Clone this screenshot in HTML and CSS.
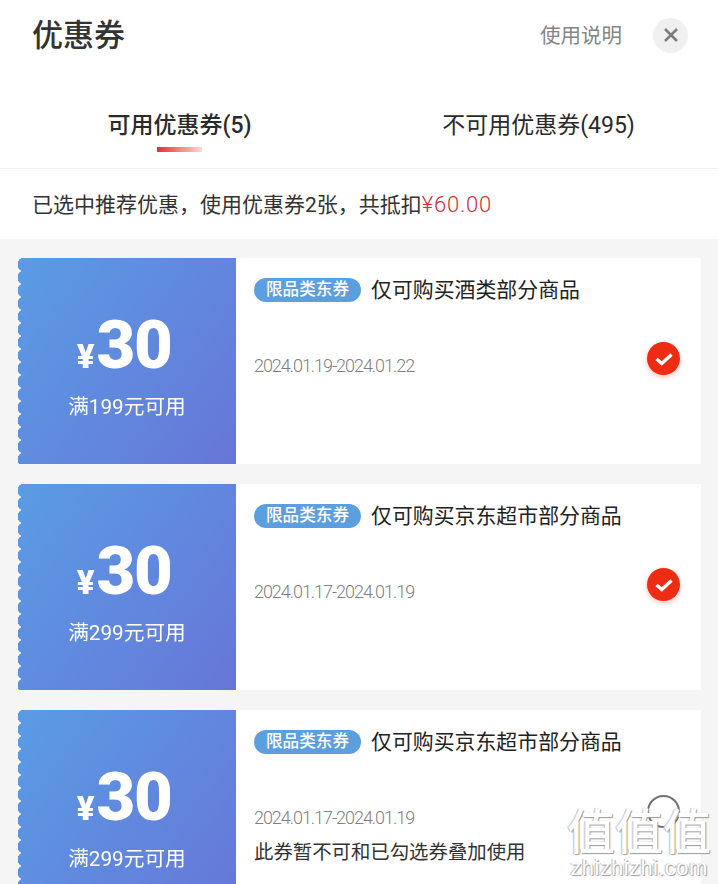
FILE: index.html
```html
<!DOCTYPE html>
<html lang="zh-CN">
<head>
    <meta charset="UTF-8">
    <meta name="viewport" content="width=device-width, initial-scale=1.0">
    <title>优惠券</title>
    <link rel="stylesheet" href="styles.css">
</head>
<body>

    <!-- Header -->
    <header class="top-bar">
        <h1 class="page-title">优惠券</h1>
        <div class="top-actions">
            <span class="help-link">使用说明</span>
            <button class="close-btn" aria-label="关闭">
                <svg width="16" height="16" viewBox="0 0 16 16"><path d="M2 2 L14 14 M14 2 L2 14" stroke="#7d7d7d" stroke-width="2.6" fill="none"/></svg>
            </button>
        </div>
    </header>

    <!-- Tabs -->
    <nav class="tabs">
        <div class="tab tab-active">可用优惠券(5)</div>
        <div class="tab">不可用优惠券(495)</div>
    </nav>

    <div class="summary">已选中推荐优惠，使用优惠券2张，共抵扣<span class="summary-price">¥60.00</span></div>

    <!-- Coupon list -->
    <main class="coupon-list">
        <section class="coupon">
            <div class="coupon-left">
                <div class="amount"><span class="yen">¥</span><span class="value">30</span></div>
                <div class="condition">满199元可用</div>
            </div>
            <div class="coupon-right">
                <div class="coupon-head">
                    <span class="badge">限品类东券</span>
                    <span class="coupon-title">仅可购买酒类部分商品</span>
                </div>
                <div class="coupon-date">2024.01.19-2024.01.22</div>
                <span class="check">
                    <svg width="20" height="16" viewBox="0 0 20 16"><path d="M2.5 8 L7.8 12.5 L17.5 3.5" stroke="#fff" stroke-width="3.4" fill="none"/></svg>
                </span>
            </div>
        </section>

        <section class="coupon">
            <div class="coupon-left">
                <div class="amount"><span class="yen">¥</span><span class="value">30</span></div>
                <div class="condition">满299元可用</div>
            </div>
            <div class="coupon-right">
                <div class="coupon-head">
                    <span class="badge">限品类东券</span>
                    <span class="coupon-title">仅可购买京东超市部分商品</span>
                </div>
                <div class="coupon-date">2024.01.17-2024.01.19</div>
                <span class="check">
                    <svg width="20" height="16" viewBox="0 0 20 16"><path d="M2.5 8 L7.8 12.5 L17.5 3.5" stroke="#fff" stroke-width="3.4" fill="none"/></svg>
                </span>
            </div>
        </section>

        <section class="coupon">
            <div class="coupon-left">
                <div class="amount"><span class="yen">¥</span><span class="value">30</span></div>
                <div class="condition">满299元可用</div>
            </div>
            <div class="coupon-right">
                <div class="coupon-head">
                    <span class="badge">限品类东券</span>
                    <span class="coupon-title">仅可购买京东超市部分商品</span>
                </div>
                <div class="coupon-date">2024.01.17-2024.01.19</div>
                <div class="coupon-note">此券暂不可和已勾选券叠加使用</div>
                <span class="radio"></span>
            </div>
        </section>
    </main>

    <!-- Watermark -->
    <div class="watermark">
        <div class="watermark-mark">值值值</div>
        <div class="watermark-url">zhizhizhi.com</div>
    </div>

</body>
</html>
```

FILE: styles.css
```css
/* Global Styles */
html, body {
    height: 884px;
    overflow: hidden;
}

body {
    position: relative;
    margin: 0;
    background-color: #fff;
    color: #262626;
    font-family: Roboto, "Noto Sans CJK SC", sans-serif;
}

/* Header */
.top-bar {
    display: flex;
    justify-content: space-between;
    align-items: center;
    height: 70px;
    padding: 0 30px 0 32px;
}

.page-title {
    margin: -6px 0 0;
    font-size: 31px;
    font-weight: 500;
    color: #333;
}

.top-actions {
    display: flex;
    align-items: center;
    gap: 31px;
}

.help-link {
    margin-top: -3px;
    font-size: 20.5px;
    color: #858585;
}

.close-btn {
    display: flex;
    justify-content: center;
    align-items: center;
    width: 35px;
    height: 35px;
    padding: 0;
    border: none;
    border-radius: 50%;
    background-color: #f0f0f0;
}

/* Tabs */
.tabs {
    display: flex;
    height: 98px;
    border-bottom: 1px solid #efefef;
}

.tab {
    position: relative;
    flex: 1;
    padding-top: 39px;
    text-align: center;
    font-size: 23px;
    line-height: 33px;
    color: #2a2a2a;
}

.tab-active {
    font-weight: 500;
}

.tab-active::after {
    content: "";
    position: absolute;
    left: 157px;
    top: 77px;
    width: 45px;
    height: 5px;
    background: linear-gradient(90deg, #e2312a, #f9d9d5);
}

/* Summary */
.summary {
    height: 70px;
    padding-left: 32px;
    font-size: 21px;
    line-height: 71px;
    color: #333;
}

.summary-price {
    color: #d92b35;
    font-size: 22px;
    font-weight: 300;
    letter-spacing: 0.8px;
}

/* Coupons */
.coupon-list {
    display: flex;
    flex-direction: column;
    gap: 20px;
    box-sizing: border-box;
    height: 645px;
    padding: 19px 17px 0 18px;
    background-color: #f5f5f5;
    overflow: hidden;
}

.coupon {
    display: flex;
    flex-shrink: 0;
    height: 206px;
}

/* mask cuts the scalloped left edge */
.coupon-left {
    display: flex;
    flex-direction: column;
    align-items: center;
    width: 218px;
    background: linear-gradient(125deg, #5a9ce4, #6776d8);
    color: #fff;
    -webkit-mask:
        radial-gradient(circle at 6.5px 6.5px, #000 6.9px, transparent 7.3px) 0 0 / 13px 13px repeat-y,
        linear-gradient(#000, #000) 4px 0 / 214px 100% no-repeat;
    mask:
        radial-gradient(circle at 6.5px 6.5px, #000 6.9px, transparent 7.3px) 0 0 / 13px 13px repeat-y,
        linear-gradient(#000, #000) 4px 0 / 214px 100% no-repeat;
}

.amount {
    display: flex;
    align-items: baseline;
    height: 70px;
    margin: 52px 6px 0 0;
    line-height: 70px;
    font-weight: 900;
}

.yen {
    font-size: 33px;
    margin-right: 2px;
}

.value {
    font-size: 67px;
    letter-spacing: -1.5px;
}

.condition {
    margin-top: 12px;
    font-size: 20.7px;
    line-height: 30px;
}

.coupon-right {
    position: relative;
    flex: 1;
    padding: 20px 0 0 18px;
    background-color: #fff;
}

.coupon-head {
    display: flex;
    align-items: center;
    gap: 10px;
    height: 24px;
}

.badge {
    width: 107px;
    height: 24px;
    border-radius: 12px;
    background-color: #5b9fe0;
    color: #fff;
    font-size: 16.6px;
    font-weight: 500;
    line-height: 24px;
    text-align: center;
}

.coupon-title {
    margin-top: -5px;
    font-size: 20.9px;
    color: #222;
}

.coupon-date {
    margin-top: 51px;
    font-size: 18px;
    font-weight: 300;
    letter-spacing: -1.05px;
    line-height: 26px;
    color: #808080;
}

.coupon-note {
    margin-top: 8px;
    font-size: 19.4px;
    line-height: 28px;
    color: #333;
}

.check {
    position: absolute;
    right: 21px;
    top: 84px;
    display: flex;
    justify-content: center;
    align-items: center;
    width: 33px;
    height: 33px;
    border-radius: 50%;
    background-color: #ee2c14;
    box-shadow: 0 2px 5px rgba(238, 44, 20, 0.3);
}

.radio {
    position: absolute;
    right: 21px;
    top: 85px;
    width: 29px;
    height: 29px;
    border: 2px solid #707070;
    border-radius: 50%;
}

/* Watermark */
.watermark {
    position: absolute;
    right: 6px;
    bottom: 3px;
    width: 146px;
    text-align: center;
    color: #fff;
    font-family: "Noto Sans CJK SC", sans-serif;
}

.watermark-mark {
    font-size: 48px;
    line-height: 54px;
    font-weight: 500;
    text-shadow: 1px 1px 1px #9a9a9a, -1px 0 1px #bdbdbd;
}

.watermark-url {
    font-family: "Liberation Sans", sans-serif;
    font-size: 22px;
    line-height: 26px;
    letter-spacing: 0.4px;
    text-shadow: 1px 1px 1px #999, -1px 0 1px #bbb;
}
```
